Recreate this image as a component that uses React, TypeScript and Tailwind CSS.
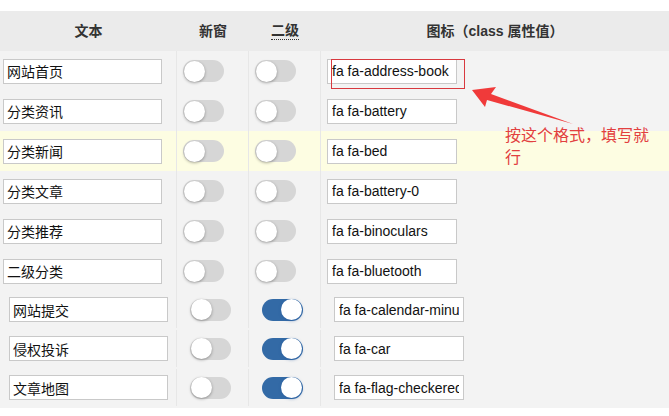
import React from "react";

interface MenuRow {
  text: string;
  icon: string;
  newWindow: boolean;
  secondLevel: boolean;
  highlight?: boolean;
  indent?: boolean;
}

const rows: MenuRow[] = [
  { text: "网站首页", icon: "fa fa-address-book", newWindow: false, secondLevel: false },
  { text: "分类资讯", icon: "fa fa-battery", newWindow: false, secondLevel: false },
  { text: "分类新闻", icon: "fa fa-bed", newWindow: false, secondLevel: false, highlight: true },
  { text: "分类文章", icon: "fa fa-battery-0", newWindow: false, secondLevel: false },
  { text: "分类推荐", icon: "fa fa-binoculars", newWindow: false, secondLevel: false },
  { text: "二级分类", icon: "fa fa-bluetooth", newWindow: false, secondLevel: false },
  { text: "网站提交", icon: "fa fa-calendar-minus-o", newWindow: false, secondLevel: true, indent: true },
  { text: "侵权投诉", icon: "fa fa-car", newWindow: false, secondLevel: true, indent: true },
  { text: "文章地图", icon: "fa fa-flag-checkered", newWindow: false, secondLevel: true, indent: true },
];

const Toggle: React.FC<{ on: boolean }> = ({ on }) => (
  <div
    className={
      on
        ? "w-[41px] h-[22px] rounded-full bg-[#336aa6] flex items-center justify-end p-px"
        : "w-[41px] h-[22px] rounded-full bg-[#d6d6d6] flex items-center justify-start p-px"
    }
  >
    <div
      className={
        on
          ? "w-[21px] h-[21px] rounded-full bg-white shadow-[0_1px_3px_rgba(40,90,160,0.5)]"
          : "w-[21px] h-[21px] rounded-full bg-white shadow-[0_1px_3px_rgba(0,0,0,0.35)]"
      }
    />
  </div>
);

const Row: React.FC<{ row: MenuRow }> = ({ row }) => {
  const bg = row.highlight ? "bg-[#fdfde2]" : "bg-[#f3f3f3]";
  // the sub-menu rows sit a touch tighter and further right
  const h = row.indent ? "h-[39px] pb-[2px]" : "h-10";
  return (
    <div className={`flex ${h} ${bg}`}>
      <div
        className={
          row.indent
            ? "w-[177px] border-r border-[#e7e7e7] flex items-center pl-[9px]"
            : "w-[177px] border-r border-[#e7e7e7] flex items-center pl-[3px]"
        }
      >
        <input
          readOnly
          value={row.text}
          className="w-[159px] h-[25px] bg-white border border-[#c9c9c9] px-[3px] text-[14px] text-[#111] outline-none"
        />
      </div>
      <div
        className={
          row.indent
            ? "w-[72px] border-r border-[#e7e7e7] flex items-center pl-[13px]"
            : "w-[72px] border-r border-[#e7e7e7] flex items-center pl-[6px]"
        }
      >
        <Toggle on={row.newWindow} />
      </div>
      <div
        className={
          row.indent
            ? "w-[72px] border-r border-[#e7e7e7] flex items-center pl-[13px]"
            : "w-[72px] border-r border-[#e7e7e7] flex items-center pl-[6px]"
        }
      >
        <Toggle on={row.secondLevel} />
      </div>
      <div
        className={
          row.indent
            ? "flex-1 flex items-center pl-[13px]"
            : "flex-1 flex items-center pl-[6px]"
        }
      >
        <input
          readOnly
          value={row.icon}
          className="w-[130px] h-[25px] bg-white border border-[#c9c9c9] px-[4px] text-[14px] text-[#111] outline-none"
        />
      </div>
    </div>
  );
};

export default function App() {
  return (
    <div
      className="relative w-[669px] h-[416px] bg-white overflow-hidden"
      style={{ fontFamily: '"Liberation Sans", "Noto Sans CJK SC", sans-serif' }}
    >
      <div className="pt-[11px]">
        <div className="flex h-10 bg-[#ebebeb] text-[14px] font-bold text-[#333]">
          <div className="w-[177px] flex items-center justify-center">文本</div>
          <div className="w-[72px] flex items-center justify-center">新窗</div>
          <div className="w-[72px] flex items-center justify-center">
            <span className="border-b border-dotted border-[#333] leading-[17px]">二级</span>
          </div>
          <div className="flex-1 flex items-center justify-center">图标（class 属性值）</div>
        </div>
        {rows.map((row) => (
          <Row key={row.text} row={row} />
        ))}
      </div>

      {/* annotation */}
      <div className="absolute left-[331px] top-[59px] w-[134px] h-[30px] border border-[#d8393f]" />
      <svg className="absolute left-0 top-0" width="669" height="416">
        <polygon
          points="472,90 496,87 491,94 573,124 487,100 485,107"
          fill="#f03a3a"
        />
      </svg>
      <div className="absolute left-[505px] top-[125px] w-[150px] text-[16px] leading-[22px] text-[#e2403f]">
        按这个格式，填写就行
      </div>
    </div>
  );
}
